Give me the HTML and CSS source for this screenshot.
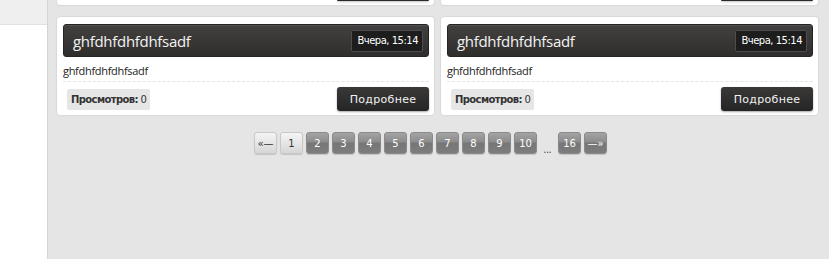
FILE: index.html
```html
<!DOCTYPE html>
<html>
<head>
<meta charset="UTF-8">
<title>Новости</title>
<link rel="stylesheet" href="styles.css">
</head>
<body>

<div class="sidebar">
	<div class="sidebar-top"></div>
</div>

<div class="main">

	<!-- bottom edge of the previous row, scrolled off the top -->
	<div class="row row-prev">
		<div class="card-stub"><span class="more-stub"></span></div>
		<div class="card-stub"><span class="more-stub"></span></div>
	</div>

	<div class="row">
		<div class="card">
			<div class="card-head"><span class="card-title">ghfdhfdhfdhfsadf</span><span class="card-date">Вчера, 15:14</span></div>
			<div class="card-text">ghfdhfdhfdhfsadf</div>
			<div class="card-foot"><span class="views"><b>Просмотров:</b> 0</span><a class="more" href="#">Подробнее</a></div>
		</div>
		<div class="card">
			<div class="card-head"><span class="card-title">ghfdhfdhfdhfsadf</span><span class="card-date">Вчера, 15:14</span></div>
			<div class="card-text">ghfdhfdhfdhfsadf</div>
			<div class="card-foot"><span class="views"><b>Просмотров:</b> 0</span><a class="more" href="#">Подробнее</a></div>
		</div>
	</div>

	<div class="pager">
		<a class="page light" href="#">«—</a>
		<span class="page light">1</span>
		<a class="page" href="#">2</a>
		<a class="page" href="#">3</a>
		<a class="page" href="#">4</a>
		<a class="page" href="#">5</a>
		<a class="page" href="#">6</a>
		<a class="page" href="#">7</a>
		<a class="page" href="#">8</a>
		<a class="page" href="#">9</a>
		<a class="page" href="#">10</a>
		<span class="dots">...</span>
		<a class="page" href="#">16</a>
		<a class="page" href="#">—»</a>
	</div>

</div>

</body>
</html>
```

FILE: styles.css
```css
body {
  margin: 0;
  display: flex;
  min-height: 259px;
  font-family: "Open Sans", "DejaVu Sans", sans-serif;
  background: #e5e5e5;
  overflow: hidden;
}

.sidebar {
  width: 47px;
  flex: none;
  background: #fff;
  border-right: 1px solid #d4d4d4;
}
.sidebar-top {
  height: 24px;
  background: #efefef;
  border-bottom: 1px solid #e2e2e2;
}

.main {
  flex: 1;
  padding: 0 11px 0 9px;
}

.row {
  display: grid;
  grid-template-columns: 1fr 1fr;
  gap: 7px;
  margin-bottom: 17px;
}
.row-prev {
  margin-bottom: 12px;
}

.card-stub {
  height: 5px;
  background: #fff;
  border-radius: 0 0 3px 3px;
  box-shadow: 0 0 2px rgba(0,0,0,0.18);
  display: flex;
  justify-content: flex-end;
  padding-right: 5px;
}
.more-stub {
  width: 92px;
  height: 1px;
  background: #2a2929;
  box-shadow: 0 1px 2px rgba(0,0,0,0.35);
  border-radius: 0 0 3px 3px;
}

.card {
  background: #fff;
  border-radius: 3px;
  box-shadow: 0 0 2px rgba(0,0,0,0.18);
  padding: 7px 5px 5px 6px;
  height: 98px;
  box-sizing: border-box;
}

.card-head {
  height: 33px;
  box-sizing: border-box;
  display: flex;
  align-items: center;
  justify-content: space-between;
  padding: 0 5px 0 9px;
  background: linear-gradient(#434140, #2f2e2d);
  border: 1px solid #232323;
  border-radius: 3px;
  box-shadow: inset 0 1px 0 rgba(255,255,255,0.08);
}
.card-title {
  color: #f2f2f2;
  font-size: 15px;
  letter-spacing: -0.3px;
}
.card-date {
  font-family: "DejaVu Sans", sans-serif;
  font-size: 10px;
  color: #fff;
  background: #1d1d1d;
  border: 1px solid #4d4d4d;
  border-radius: 2px;
  padding: 4px 4px 5px 5px;
  letter-spacing: -0.5px;
}

.card-text {
  font-size: 11px;
  letter-spacing: -0.3px;
  color: #222;
  padding: 6px 0 3px 0;
  border-bottom: 1px dashed #e4e4e4;
}

.card-foot {
  display: flex;
  align-items: center;
  justify-content: space-between;
  padding: 5px 0 0 4px;
}
.views {
  font-family: "DejaVu Sans", sans-serif;
  font-size: 10px;
  color: #333;
  background: #e6e6e6;
  border-radius: 2px;
  padding: 5px 4px 5px 4px;
  letter-spacing: -0.6px;
}
.more {
  width: 92px;
  height: 24px;
  box-sizing: border-box;
  display: flex;
  align-items: center;
  justify-content: center;
  font-family: "DejaVu Sans", sans-serif;
  font-size: 11px;
  letter-spacing: 0.3px;
  color: #f2f2f2;
  text-decoration: none;
  background: linear-gradient(#3a3938, #262525);
  border-radius: 3px;
  box-shadow: 0 1px 2px rgba(0,0,0,0.35);
}

.pager {
  display: flex;
  justify-content: center;
  align-items: flex-end;
  gap: 3px;
  padding-right: 14px;
}
.page {
  width: 23px;
  height: 22px;
  box-sizing: border-box;
  display: flex;
  align-items: center;
  justify-content: center;
  font-family: "DejaVu Sans", sans-serif;
  font-size: 10px;
  color: #fff;
  text-decoration: none;
  border: 1px solid #8a8a8a;
  border-radius: 3px;
  background: linear-gradient(#a3a3a3 0%, #8c8c8c 45%, #767676 50%, #7d7d7d 100%);
  box-shadow: 0 1px 1px rgba(0,0,0,0.15);
}
.page.light {
  color: #333;
  border-color: #c8c8c8;
  background: linear-gradient(#f4f4f4 0%, #e6e6e6 50%, #d6d6d6 100%);
}
.dots {
  font-size: 10px;
  color: #333;
  width: 15px;
  text-align: center;
  line-height: 10px;
}
```
